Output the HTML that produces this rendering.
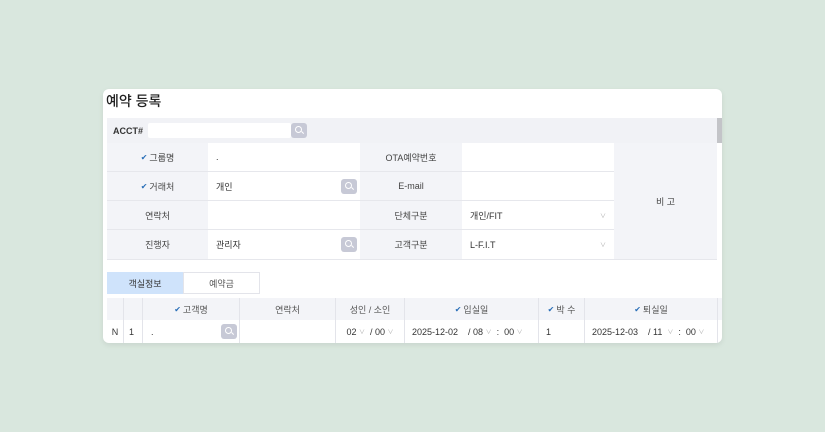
<!DOCTYPE html>
<html><head><meta charset="utf-8"><style>
*{margin:0;padding:0;box-sizing:border-box}
body{width:825px;height:432px;background:#d9e7de;font-family:"Liberation Sans","Noto Sans CJK KR",sans-serif;position:relative;overflow:hidden;color:#333}
.card{position:absolute;left:103px;top:89px;width:619px;height:254px;background:#fff;border-radius:6px;overflow:hidden;box-shadow:0 2px 6px rgba(0,0,0,.08)}
.a{position:absolute}
.t{font-size:9px;display:flex;align-items:center}
.lb{background:#f3f4f8;justify-content:center;color:#444}
.bd{border-bottom:1px solid #e6e7ec}
.sb{position:absolute;width:16px;height:15px;background:#c7c9d6;border-radius:3px}
.sb:before{content:"";position:absolute;left:4px;top:3px;width:5px;height:5px;border:1.4px solid #fff;border-radius:50%}
.sb:after{content:"";position:absolute;left:10px;top:9px;width:3px;height:1.4px;background:#fff;transform:rotate(45deg)}
.ck{color:#2a6fb8;font-size:8px;margin-right:2px}
.ch{color:#aaa;font-size:6px}
</style></head><body>
<div class="card">
<div class="a" style="left:3px;top:2px;font-size:14px;font-weight:500;color:#222">예약 등록</div>
<div class="a" style="left:4px;top:29px;width:610px;height:25px;background:#f1f2f6"></div>
<div class="a t" style="left:10px;top:29px;height:25px;font-weight:bold;color:#333">ACCT#</div>
<div class="a" style="left:45px;top:34px;width:143px;height:15px;background:#fff;border-radius:2px"></div>
<div class="sb" style="left:188px;top:34px"></div>
<div class="a" style="left:614px;top:29px;width:5px;height:25px;background:#c3c4c8"></div>

<div class="a t lb bd" style="left:4px;top:54px;width:101px;height:29px"><span class="ck">✔</span>그룹명</div>
<div class="a t bd" style="left:105px;top:54px;width:152px;height:29px;padding-left:8px">.</div>
<div class="a t lb bd" style="left:257px;top:54px;width:102px;height:29px">OTA예약번호</div>
<div class="a bd" style="left:359px;top:54px;width:152px;height:29px"></div>

<div class="a t lb bd" style="left:4px;top:83px;width:101px;height:29px"><span class="ck">✔</span>거래처</div>
<div class="a t bd" style="left:105px;top:83px;width:152px;height:29px;padding-left:8px">개인</div>
<div class="sb" style="left:238px;top:90px"></div>
<div class="a t lb bd" style="left:257px;top:83px;width:102px;height:29px">E-mail</div>
<div class="a bd" style="left:359px;top:83px;width:152px;height:29px"></div>

<div class="a t lb bd" style="left:4px;top:112px;width:101px;height:29px">연락처</div>
<div class="a bd" style="left:105px;top:112px;width:152px;height:29px"></div>
<div class="a t lb bd" style="left:257px;top:112px;width:102px;height:29px">단체구분</div>
<div class="a t bd" style="left:359px;top:112px;width:152px;height:29px;padding-left:8px;justify-content:space-between;padding-right:8px">개인/FIT<span class="ch">∨</span></div>

<div class="a t lb" style="left:4px;top:141px;width:101px;height:29px">진행자</div>
<div class="a t" style="left:105px;top:141px;width:152px;height:29px;padding-left:8px">관리자</div>
<div class="sb" style="left:238px;top:148px"></div>
<div class="a t lb" style="left:257px;top:141px;width:102px;height:29px">고객구분</div>
<div class="a t" style="left:359px;top:141px;width:152px;height:29px;padding-left:8px;justify-content:space-between;padding-right:8px">L-F.I.T<span class="ch">∨</span></div>

<div class="a t lb" style="left:511px;top:54px;width:103px;height:116px">비 고</div>
<div class="a" style="left:4px;top:170px;width:610px;height:1px;background:#e6e7ec"></div>

<div class="a t" style="left:4px;top:183px;width:76px;height:22px;background:#cfe3fb;justify-content:center">객실정보</div>
<div class="a t" style="left:80px;top:183px;width:77px;height:22px;border:1px solid #e3e4ea;justify-content:center;color:#555">예약금</div>

<div class="a" style="left:4px;top:209px;width:615px;height:22px;background:#f3f4f8"></div>
<div class="a t" style="left:4px;top:209px;height:22px;width:615px;color:#555">
<span style="width:17px;border-right:1px solid #e3e4ea;height:100%"></span>
<span style="width:19px;border-right:1px solid #e3e4ea;height:100%"></span>
<span style="width:97px;border-right:1px solid #e3e4ea;height:100%;display:flex;align-items:center;justify-content:center"><span class="ck">✔</span>고객명</span>
<span style="width:96px;border-right:1px solid #e3e4ea;height:100%;display:flex;align-items:center;justify-content:center">연락처</span>
<span style="width:69px;border-right:1px solid #e3e4ea;height:100%;display:flex;align-items:center;justify-content:center">성인 / 소인</span>
<span style="width:134px;border-right:1px solid #e3e4ea;height:100%;display:flex;align-items:center;justify-content:center"><span class="ck">✔</span>입실일</span>
<span style="width:46px;border-right:1px solid #e3e4ea;height:100%;display:flex;align-items:center;justify-content:center"><span class="ck">✔</span>박 수</span>
<span style="width:133px;border-right:1px solid #e3e4ea;height:100%;display:flex;align-items:center;justify-content:center"><span class="ck">✔</span>퇴실일</span>
</div>
<div class="a t" style="left:4px;top:231px;height:23px;width:615px;color:#333">
<span style="width:17px;border-right:1px solid #e3e4ea;height:100%;display:flex;align-items:center;justify-content:center">N</span>
<span style="width:19px;border-right:1px solid #e3e4ea;height:100%;display:flex;align-items:center;padding-left:5px">1</span>
<span style="width:97px;border-right:1px solid #e3e4ea;height:100%;display:flex;align-items:center;padding-left:8px">.</span>
<span style="width:96px;border-right:1px solid #e3e4ea;height:100%"></span>
<span style="width:69px;border-right:1px solid #e3e4ea;height:100%;display:flex;align-items:center;justify-content:center;white-space:pre">02 <span class="ch">∨</span>  / 00 <span class="ch">∨</span></span>
<span style="width:134px;border-right:1px solid #e3e4ea;height:100%;display:flex;align-items:center;padding-left:7px;white-space:pre">2025-12-02    / 08 <span class="ch">∨</span>  :  00 <span class="ch">∨</span></span>
<span style="width:46px;border-right:1px solid #e3e4ea;height:100%;display:flex;align-items:center;padding-left:7px">1</span>
<span style="width:133px;border-right:1px solid #e3e4ea;height:100%;display:flex;align-items:center;padding-left:7px;white-space:pre">2025-12-03    / 11  <span class="ch">∨</span>  :  00 <span class="ch">∨</span></span>
</div>
<div class="sb" style="left:118px;top:235px"></div>
</div>
</body></html>
